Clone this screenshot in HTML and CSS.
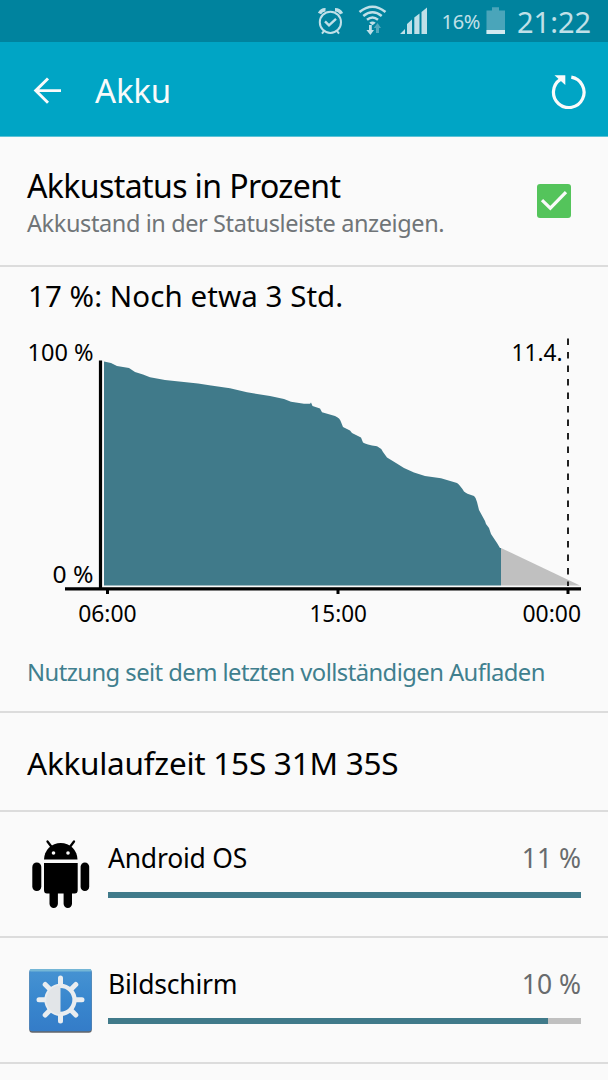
FILE: index.html
```html
<!DOCTYPE html>
<html lang="de">
<head>
<meta charset="utf-8">
<title>Akku</title>
<link rel="stylesheet" href="styles.css">
</head>
<body>
<header class="statusbar">
  <svg class="status-icons" viewBox="310 0 125 42" width="125" height="42">
    <g fill="none" stroke="#c0e0e8" stroke-width="2">
      <circle cx="330.400" cy="22.300" r="10.600"/>
      <path d="M325 21.300l4 4 7-6.500" stroke-width="2.400"/>
      <path d="M319.500 13.500q2-4 6-3.800M335 9.700q4.500 0 6.500 4" stroke-width="3.600"/>
      <path d="M324 31l-2 2.700M337 31l2 2.700"/>
      <path d="M359.500 12Q372.500 1.500 385.500 12M363.300 16Q372.500 8.500 381.700 16M367 19.800Q372.500 15.200 378 19.800" stroke-width="2.500"/>
    </g>
    <path d="M369.300 22.800q3.200-2.400 6.400 0l-3.200 2.500z" fill="#c0e0e8"/>
    <path d="M369 25h2.800v5h2.200l-3.600 5-4-5h2.600z" fill="#c0e0e8"/>
    <path d="M376 33v-5h-2.200l3.700-5 3.500 5h-2v5z" fill="#52a9bd"/>
    <path d="M400 34l5-5v5zM407 34v-10l5-4.500v14.500zM414.300 34V17.500l5.200-4v20.500zM421.500 34V12l5.500-4.500v26.500z" fill="#c0e0e8"/>
  </svg>
  <span class="status-percent">16%</span>
  <svg class="battery" viewBox="0 0 20 28" width="20" height="28">
    <path d="M.500 3.500H6V.300h7v3.200h6v23.500H.500z" fill="#4aa5ba"/>
    <path d="M.500 23h18.500v4H.500z" fill="#d2eaf0"/>
  </svg>
  <span class="clock">21:22</span>
</header>

<nav class="appbar">
  <svg class="back" viewBox="0 0 30 30" width="30" height="30" fill="none" stroke="#fafafa" stroke-width="2.900"><path d="M15 2.500L2.700 14.600l12.300 12.200M2.700 14.600h25.300"/></svg>
  <h1 class="appbar-title">Akku</h1>
  <svg class="refresh" viewBox="0 0 36 36" width="36" height="36">
    <path d="M21.300 4.200A15.300 15.300 0 1 1 10.500 6.400" fill="none" stroke="#fafafa" stroke-width="3.200"/>
    <path d="M4.500 2.300h10.800v9.700z" fill="#fafafa"/>
  </svg>
</nav>

<main>
  <section class="setting">
    <div>
      <h2 class="setting-title">Akkustatus in Prozent</h2>
      <p class="setting-note">Akkustand in der Statusleiste anzeigen.</p>
    </div>
    <svg class="checkbox" viewBox="0 0 34 34" width="34" height="34">
      <rect width="34" height="34" rx="3" fill="#54c45b"/>
      <path d="M5 16.200l8.300 8L29 8.200" fill="none" stroke="#fafafa" stroke-width="3.200"/>
    </svg>
  </section>

  <section class="history">
    <h2 class="history-title">17 %: Noch etwa 3 Std.</h2>
    <svg class="chart" viewBox="0 320 608 320" width="608" height="320">
      <path fill="#407a8a" d="M104 585.500V361.500L111 363L117 366L129 368L135 372L143 374.500L150 377.300L165 380L198 383.500L211 385.500L230 388.300L247 392.300L270 396L284 399L291 401.700L304 403.700H310L311 402.500L312.500 406L320 408.500L322 412.300L335 416Q340 418 341 422L343 427L350 430.500L352 433L361 437.500L363 442.500Q366 444.500 377 446.300Q381 448 383 452L387 457.500L396 463L404 468L414 472.500L425 476L441 478.300L457 483Q460 485 464 491.500Q466 493.500 474 496Q476 497.500 477 502L479 510L485 521L486 524L489 528L491 534L497 543L500 548H501V585.500z"/>
      <path fill="#c0c0c0" d="M501 585.500V548L580 585.500z"/>
      <path d="M568 338.500V586" stroke="#222" stroke-width="2" stroke-dasharray="6.500 7"/>
      <path d="M100.500 360.500V588M65 588.800H581" fill="none" stroke="#000" stroke-width="3.200"/>
      <path d="M107.500 588V594M338 588V594M568 588V594" stroke="#000" stroke-width="3"/>
      <g class="chart-labels">
        <text x="27.500" y="361" textLength="66" lengthAdjust="spacingAndGlyphs">100 %</text>
        <text x="52.500" y="582.700" textLength="41" lengthAdjust="spacingAndGlyphs">0 %</text>
        <text x="511.500" y="361" textLength="51" lengthAdjust="spacingAndGlyphs">11.4.</text>
        <text x="78.200" y="621.500" textLength="58.500" lengthAdjust="spacingAndGlyphs">06:00</text>
        <text x="309.500" y="621.500" textLength="57.500" lengthAdjust="spacingAndGlyphs">15:00</text>
        <text x="522.500" y="621.500" textLength="58.500" lengthAdjust="spacingAndGlyphs">00:00</text>
      </g>
    </svg>
    <p class="history-note">Nutzung seit dem letzten vollständigen Aufladen</p>
  </section>

  <section class="runtime"><h2 class="runtime-title">Akkulaufzeit 15S 31M 35S</h2></section>

  <section class="usage">
    <svg class="usage-icon" viewBox="28 838 66 72" width="66" height="72">
      <path d="M44 859.500a16.700 16.500 0 0 1 33.500 0z"/>
      <path d="M47.500 841.500l4.500 6M74 841.500l-4.500 6" stroke="#000" stroke-width="2.300" stroke-linecap="round"/>
      <path d="M44 863h33.700v27q0 3.500-3 3.500H72v10.300a4.200 4.200 0 0 1-8.400 0V893.500h-5.700v10.300a4.200 4.200 0 0 1-8.400 0V893.500H47q-3 0-3-3.500z"/>
      <rect x="32.300" y="862.500" width="9" height="28.500" rx="4.400"/>
      <rect x="80.600" y="862.500" width="8.600" height="28.500" rx="4.300"/>
      <circle cx="53.500" cy="853" r="1.800" fill="#fafafa"/><circle cx="68" cy="853" r="1.800" fill="#fafafa"/>
    </svg>
    <div class="usage-body">
      <div class="usage-line"><span class="usage-name">Android OS</span><span class="usage-value">11 %</span></div>
      <div class="bar"><div class="bar-fill" style="width:100%"></div></div>
    </div>
  </section>

  <section class="usage">
    <svg class="usage-icon" viewBox="28 964 66 72" width="66" height="72">
      <defs><linearGradient id="tile" x2="0" y2="1"><stop offset="0" stop-color="#4693d2"/><stop offset=".5" stop-color="#3987ce"/><stop offset="1" stop-color="#347cc8"/></linearGradient></defs>
      <rect x="29.300" y="970" width="62.500" height="62.800" rx="3" fill="#63666b"/>
      <rect x="29.300" y="969" width="62.400" height="62.300" rx="3" fill="url(#tile)"/>
      <path d="M31 970.300h59" stroke="#74b6d6" stroke-width="2.500" stroke-linecap="round"/>
      <g stroke="#e9edf0" stroke-width="5" stroke-linecap="round" fill="none">
        <path d="M60.500 978v6M60.500 1015v6M39 999.800h6M76 999.800h6M45.200 984.500l4 4M71.800 1011.100l4 4M75.800 984.500l-4 4M49.200 1011.100l-4 4"/>
        <circle cx="60.500" cy="999.800" r="14" stroke-width="4.300"/>
      </g>
      <path d="M60.500 985.500a14.300 14.300 0 0 0 0 28.600z" fill="#e2e5e8"/>
    </svg>
    <div class="usage-body">
      <div class="usage-line"><span class="usage-name">Bildschirm</span><span class="usage-value">10 %</span></div>
      <div class="bar"><div class="bar-fill" style="width:93.100%"></div></div>
    </div>
  </section>
</main>
</body>
</html>
```
FILE: styles.css
```css
* { box-sizing: border-box; margin: 0; padding: 0; }
body { width: 608px; height: 1080px; overflow: hidden; background: #fafafa; color: #000; font-family: "Noto Sans", sans-serif; font-weight: 400; }
h1, h2, p { font-weight: 400; white-space: nowrap; }
svg { display: block; flex: none; }
span { white-space: nowrap; }

.statusbar { display: flex; height: 42px; padding-left: 310px; background: #00839e; color: #c0e0e8; }
.status-percent { width: 51px; padding-left: 6.500px; font-size: 20px; line-height: 43px; letter-spacing: -.3px; }
.battery { margin-top: 7px; }
.clock { margin-left: 11px; font-size: 29px; line-height: 44px; }

.appbar { display: flex; align-items: center; height: 95px; padding: 3px 22px 0 33px; background: #00a5c5; border-bottom: 1px solid #5cc2d6; color: #fafafa; }
.appbar-title { flex: 1; margin-left: 32px; padding-top: 1px; font-size: 33px; line-height: 50px; letter-spacing: -.2px; }

.setting { display: flex; justify-content: space-between; height: 130px; padding: 28px 37px 0 27px; border-bottom: 2px solid #dcdcdc; }
.setting-title { font-size: 32px; line-height: 42px; letter-spacing: -.6px; }
.setting-note { margin-top: 1px; font-size: 23.5px; line-height: 30px; letter-spacing: -.4px; color: #707578; }
.checkbox { margin-top: 19px; }

.history { height: 446px; border-bottom: 2px solid #dcdcdc; }
.history-title { height: 53px; padding: 9px 0 0 28px; font-size: 29.5px; line-height: 40px; letter-spacing: .06px; }
.chart-labels { font-size: 23.5px; }
.history-note { padding: 17px 0 0 27px; font-size: 23.8px; line-height: 30px; letter-spacing: -.56px; color: #407f8e; }

.runtime { height: 99px; padding: 30px 0 0 27px; border-bottom: 2px solid #dcdcdc; }
.runtime-title { font-size: 31.5px; line-height: 40px; letter-spacing: -.25px; }

.usage { display: flex; gap: 14px; height: 126px; padding: 26px 27px 0 28px; border-bottom: 2px solid #dcdcdc; }
.usage-body { flex: 1; }
.usage-line { display: flex; justify-content: space-between; height: 54px; font-size: 26.5px; line-height: 41px; }
.usage-name { letter-spacing: -.22px; }
.usage-value { color: #686b6d; }
.bar { height: 6px; background: #c0c0c0; }
.bar-fill { height: 6px; background: #407a8a; }
```
